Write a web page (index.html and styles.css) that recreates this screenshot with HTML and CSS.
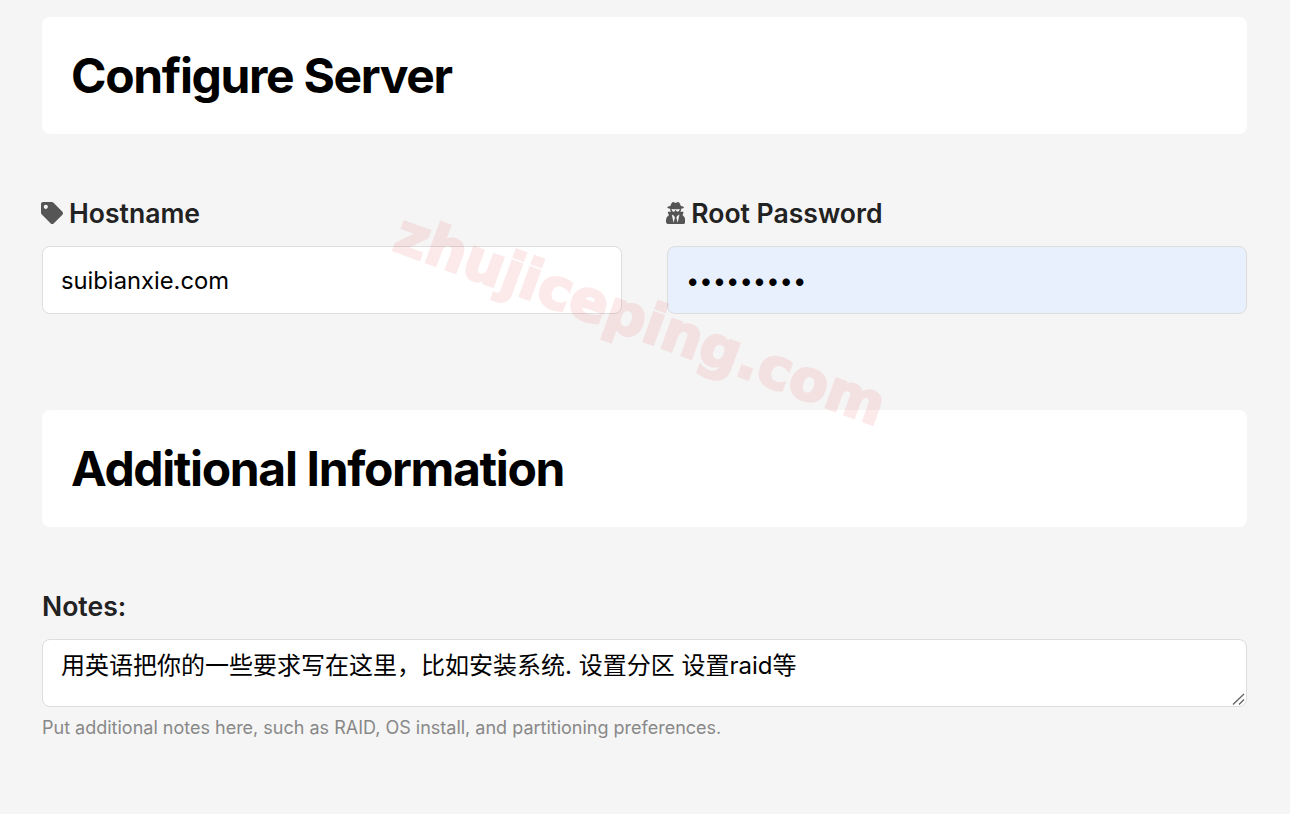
FILE: index.html
```html
<!DOCTYPE html>
<html lang="en">
<head>
    <meta charset="UTF-8">
    <meta name="viewport" content="width=device-width, initial-scale=1.0">
    <title>Configure Server</title>
    <link rel="stylesheet" href="styles.css">
</head>
<body>

    <div class="container">
        <!-- Server settings -->
        <div class="section-title">
            <h2>Configure Server</h2>
        </div>

        <div class="field-row">
            <div class="field">
                <label for="hostname">
                    <svg class="icon icon-tag" viewBox="0 0 512 512"><path d="M0 252.118V48C0 21.49 21.49 0 48 0h204.118a48 48 0 0 1 33.941 14.059l211.882 211.882c18.745 18.745 18.745 49.137 0 67.882L293.823 497.941c-18.745 18.745-49.137 18.745-67.882 0L14.059 286.059A48 48 0 0 1 0 252.118zM112 64c-26.51 0-48 21.49-48 48s21.49 48 48 48 48-21.49 48-48-21.49-48-48-48z"/></svg>
                    Hostname
                </label>
                <input type="text" id="hostname" value="suibianxie.com">
            </div>
            <div class="field">
                <label for="rootPassword">
                    <svg class="icon icon-secret" viewBox="0 0 448 512"><path d="M383.9 308.3l23.9-62.6c4-10.5-3.7-21.7-15-21.7h-58.5c11-18.9 17.8-40.6 17.8-64v-.3c39.2-7.8 64-19.1 64-31.7 0-13.3-27.3-25.1-70.1-33-9.2-32.8-27-65.8-40.6-82.8-9.5-11.9-25.9-15.6-39.5-8.8l-27.6 13.8c-9 4.5-19.6 4.5-28.6 0L182.1 3.4c-13.6-6.8-30-3.1-39.5 8.8-13.5 17-31.4 50-40.6 82.8-42.7 7.9-70 19.7-70 33 0 12.6 24.8 23.9 64 31.7v.3c0 23.4 6.8 45.1 17.8 64H56.3c-11.5 0-19.2 11.7-14.7 22.3l25.8 60.2C27.3 329.8 0 372.7 0 422.4v44.8C0 491.9 20.1 512 44.8 512h358.4c24.7 0 44.8-20.1 44.8-44.8v-44.8c0-48.4-25.8-90.4-64.1-114.1zM176 480l-41.6-192 49.6 32 24 40-32 120zm96 0l-32-120 24-40 49.6-32L272 480zm41.7-298.5c-3.9 11.9-7 24.6-16.5 33.4-10.1 9.3-48 22.4-64-25-2.8-8.4-15.4-8.4-18.3 0-17 50.2-56 32.4-64 25-9.5-8.8-12.7-21.5-16.5-33.4-.8-2.5-6.3-5.7-6.3-5.8v-10.8c28.3 3.6 61 5.8 96 5.8s67.7-2.1 96-5.8v10.8c-.1.1-5.6 3.2-6.4 5.8z"/></svg>
                    Root Password
                </label>
                <input type="password" class="autofilled" id="rootPassword" value="123456789">
            </div>
        </div>

        <!-- Extra info -->
        <div class="section-title">
            <h2>Additional Information</h2>
        </div>

        <div class="field notes">
            <label for="notes">Notes:</label>
            <textarea id="notes">用英语把你的一些要求写在这里，比如安装系统. 设置分区 设置raid等</textarea>
            <p class="help-text">Put additional notes here, such as RAID, OS install, and partitioning preferences.</p>
        </div>
    </div>

    <div class="watermark">zhujiceping.com</div>

</body>
</html>
```

FILE: styles.css
```css
/* Base Styling */
html, body {
    height: 100%;
}
body {
    font-family: Inter, "Noto Sans CJK SC", sans-serif;
    background-color: #f5f5f5;
    color: #222;
    margin: 0;
    overflow: hidden;
}
.container {
    padding: 17px 43px 0 42px;
}

/* Section headers */
.section-title {
    background-color: #ffffff;
    border-radius: 8px;
    height: 117px;
    padding: 0 29px;
    display: flex;
    align-items: center;
}
.section-title h2 {
    margin: 0 0 1px;
    font-size: 48px;
    font-weight: 700;
    letter-spacing: -1.35px;
    color: #000;
}

/* Fields */
.field-row {
    display: grid;
    grid-template-columns: 580px 580px;
    column-gap: 45px;
    margin-top: 64px;
    margin-bottom: 96px;
}
.notes {
    margin-top: 64px;
}
.field label {
    display: flex;
    align-items: center;
    gap: 6px;
    height: 30px;
    margin-bottom: 18px;
    font-size: 26.56px;
    font-weight: 600;
}
.icon {
    height: 22px;
    margin-left: -1px;
    fill: #555;
    flex: none;
}
.icon-tag {
    width: 22px;
}
.icon-secret {
    width: 19.25px;
}
.field input, .field textarea {
    display: block;
    box-sizing: border-box;
    width: 100%;
    height: 68px;
    padding: 12px 18px;
    background-color: #fff;
    border: 1px solid #ddd;
    border-radius: 8px;
    font-family: Inter, "Noto Sans CJK SC", sans-serif;
    font-size: 23.75px;
    color: #000;
    outline: none;
}
.field textarea {
    font-size: 24px;
    resize: vertical;
    line-height: 30px;
    padding-top: 11px;
}
.field textarea::-webkit-resizer {
    background: url("data:image/svg+xml,%3Csvg xmlns='http://www.w3.org/2000/svg' width='15' height='15'%3E%3Cpath d='M2 13.5 13 3M8 13.5 13 8.5' stroke='%23666' stroke-width='1.4' fill='none'/%3E%3C/svg%3E") no-repeat;
}
.field input.autofilled {
    background-color: #e8f0fe;
}
.help-text {
    margin: 9px 0 0;
    font-size: 18px;
    line-height: 24px;
    color: #888;
}

/* Watermark over the page */
.watermark {
    position: absolute;
    left: 382px;
    top: 287px;
    font-family: "DejaVu Sans", sans-serif;
    font-size: 56.5px;
    font-weight: 700;
    white-space: nowrap;
    color: #e61e28;
    -webkit-text-stroke: 2.5px #e61e28;
    opacity: 0.085;
    transform: rotate(20deg);
    pointer-events: none;
}
```
